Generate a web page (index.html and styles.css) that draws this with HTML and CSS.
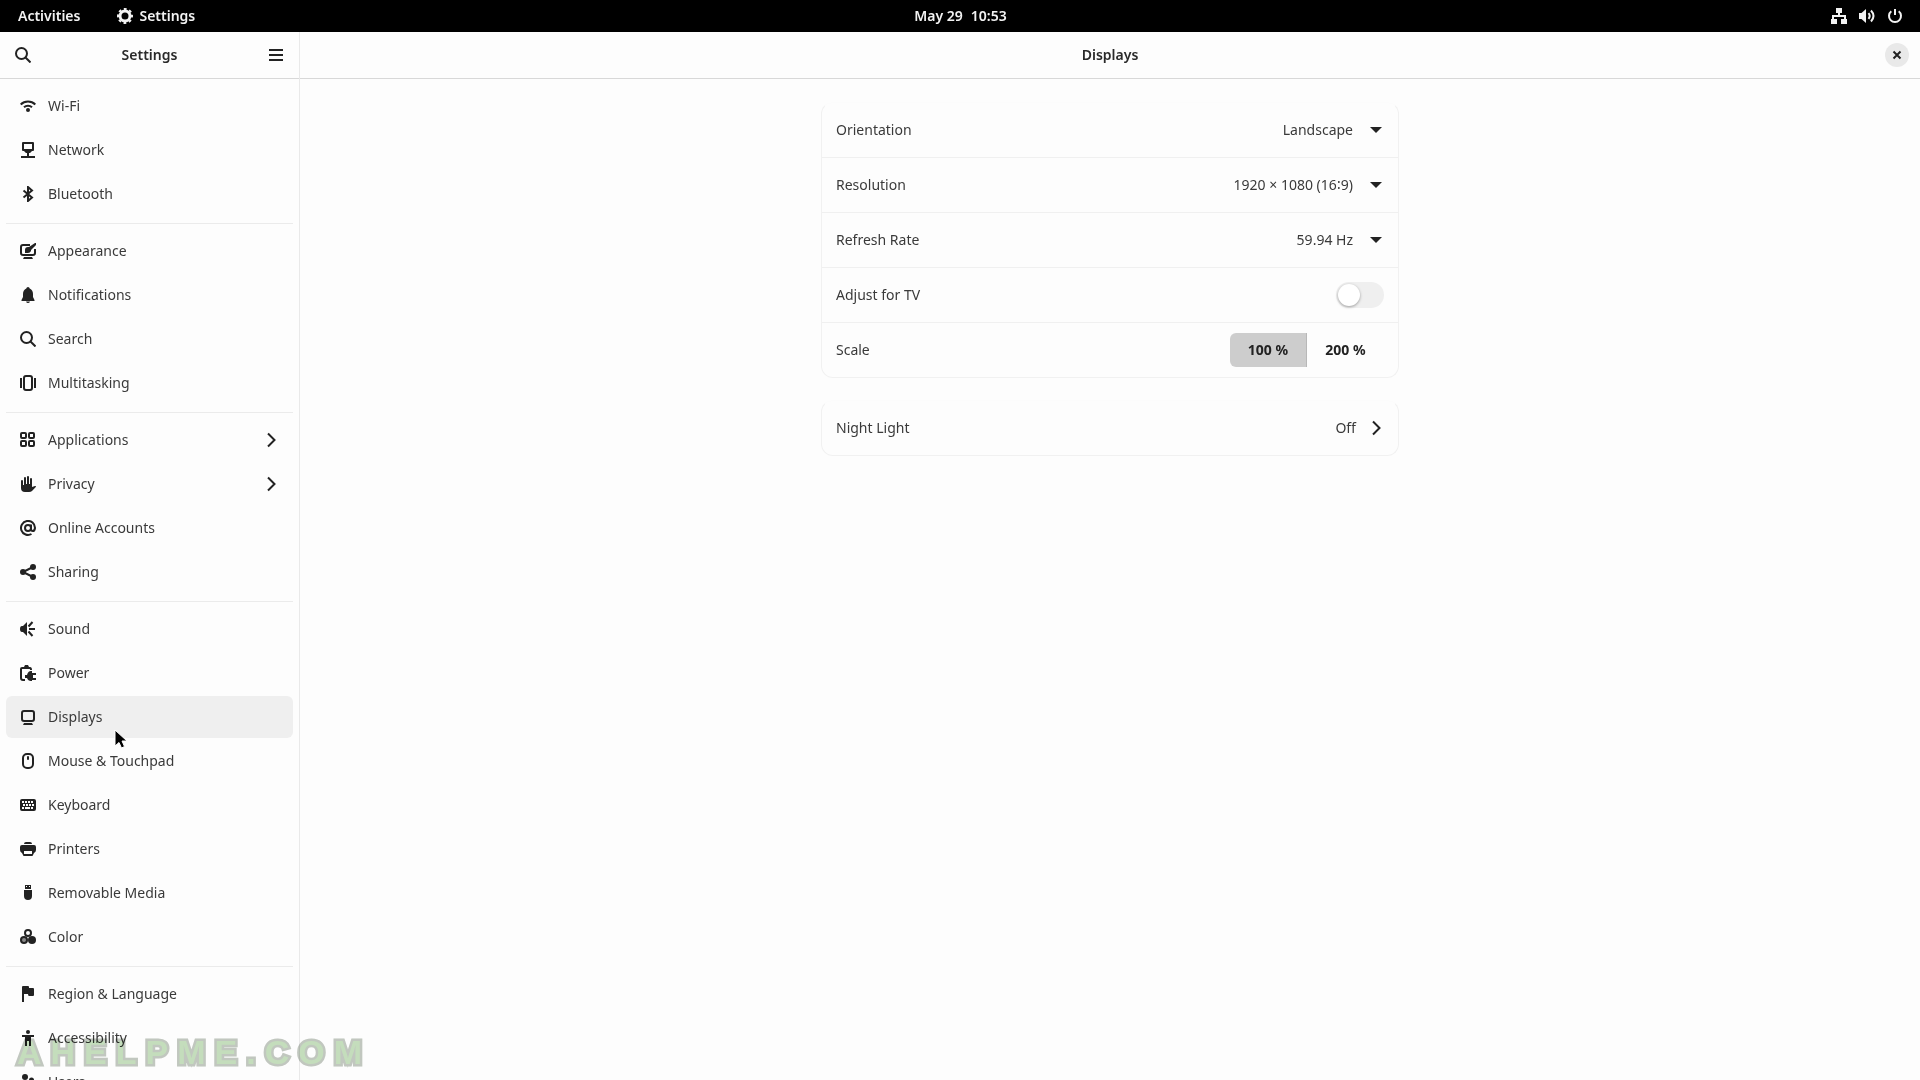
FILE: index.html
```html
<!DOCTYPE html>
<html lang="en">
<head>
    <meta charset="UTF-8">
    <meta name="viewport" content="width=device-width, initial-scale=1.0">
    <title>Settings - Displays</title>
    <link rel="stylesheet" href="styles.css">
</head>
<body>

    <header class="topbar">
        <div class="topbar-left">
            <button class="topbar-item">Activities</button>
            <button class="topbar-item app-menu">
                <svg class="icon" viewBox="0 0 16 16"><circle cx="8" cy="8" r="5" fill="none" stroke="currentColor" stroke-width="3"/><circle cx="8" cy="8" r="7" fill="none" stroke="currentColor" stroke-width="2" stroke-dasharray="2.8 2.7" stroke-dashoffset="1.4"/></svg>
                Settings
            </button>
        </div>
        <button class="topbar-item clock"><span>May 29</span><span>10:53</span></button>
        <button class="topbar-item status" aria-label="System menu">
            <svg class="icon" viewBox="0 0 16 16"><path d="M5 0h6v5H9v2h6v4h1v5h-6v-5h3V9H3v2h3v5H0v-5h1V7h6V5H5z"/></svg>
            <svg class="icon" viewBox="0 0 16 16"><path d="M0 5h2.500L7 1v14l-4.500-4H0z"/><path d="M9.500 5.200q2.400 2.800 0 5.600M12 2.500q5 5.500 0 11" class="line"/></svg>
            <svg class="icon" viewBox="0 0 16 16"><path d="M4.300 3.300a6 6 0 1 0 7.400 0M8 1v6" class="line"/></svg>
        </button>
    </header>

    <div class="window">
        <aside class="sidebar">
            <div class="headerbar">
                <button class="header-button" aria-label="Search">
                    <svg class="icon" viewBox="0 0 16 16"><circle cx="6.500" cy="6.500" r="5.500" class="line"/><path d="M10.500 10.500l5 5" class="line"/></svg>
                </button>
                <h2>Settings</h2>
                <button class="header-button" aria-label="Menu">
                    <svg class="icon" viewBox="0 0 16 16"><path d="M1 2h14v2H1zM1 7h14v2H1zM1 12h14v2H1z"/></svg>
                </button>
            </div>

            <nav class="panels">
                <a href="#wifi"><svg class="icon" viewBox="0 0 16 16"><path d="M.7 6.500c4-4 10.600-4 14.600 0M4 9.300c2.200-2.200 5.800-2.200 8 0" class="line"/><circle cx="8" cy="12" r="2"/></svg>Wi-Fi</a>
                <a href="#network"><svg class="icon" viewBox="0 0 16 16"><path d="M3 1h10v7H3z" class="line" stroke-linejoin="round"/><path d="M3 8h10l-3 3H9v3h6v2H1v-2h6v-3H6z"/></svg>Network</a>
                <a href="#bluetooth"><svg class="icon" viewBox="0 0 16 16"><path d="M3.500 4.500l8.500 7L8 15V1l4 3.500-8.500 7" class="line"/></svg>Bluetooth</a>
                <hr>
                <a href="#appearance"><svg class="icon" viewBox="0 0 16 16"><path d="M10 2H3Q1 2 1 4v6q0 2 2 2h10q2 0 2-2V6" class="line"/><path d="M4 14h8l1 2H3zM5 10V7q0-3 3-3h1l6-4h1v2l-5 5v1q-1 2-3 2z"/></svg>Appearance</a>
                <a href="#notifications"><svg class="icon" viewBox="0 0 16 16"><path d="M8 0q1.500 0 1.700 1.500C12 2.500 13 4.500 13 7v3l1.500 3v1h-13v-1L3 10V7c0-2.500 1-4.500 3.300-5.500Q6.500 0 8 0zM6 14.500h4Q9.500 16 8 16t-2-1.500z"/></svg>Notifications</a>
                <a href="#search"><svg class="icon" viewBox="0 0 16 16"><circle cx="6.500" cy="6.500" r="5.500" class="line"/><path d="M10.500 10.500l5 5" class="line"/></svg>Search</a>
                <a href="#multitasking"><svg class="icon" viewBox="0 0 16 16"><rect x="4" y="1" width="8" height="14" rx="2" class="line"/><path d="M0 3h2v10H0zM14 3h2v10h-2z"/></svg>Multitasking</a>
                <hr>
                <a href="#applications"><svg class="icon" viewBox="0 0 16 16"><g class="line"><rect x="1" y="1" width="5" height="5" rx="1"/><rect x="9" y="1" width="5" height="5" rx="1"/><rect x="1" y="9" width="5" height="5" rx="1"/><rect x="9" y="9" width="5" height="5" rx="1"/></g></svg>Applications<svg class="icon chevron" viewBox="0 0 16 16"><path d="M5 1.500L11.500 8 5 14.500" class="line"/></svg></a>
                <a href="#privacy"><svg class="icon" viewBox="0 0 16 16"><path d="M1 5q0-1 1-1t1 1v4h1V2q0-1 1-1t1 1v6h1V1q0-1 1-1t1 1v7h1V3q0-1 1-1t1 1v8l3-1q1.500 0 .8 1L12 15q-1 1-3 1H5q-4 0-4-4z"/></svg>Privacy<svg class="icon chevron" viewBox="0 0 16 16"><path d="M5 1.500L11.500 8 5 14.500" class="line"/></svg></a>
                <a href="#accounts"><svg class="icon" viewBox="0 0 16 16"><circle cx="8" cy="8" r="3" class="line"/><path d="M11 4.500V9q0 2 1.800 2T15 8a7 7 0 1 0-3.500 6" class="line"/></svg>Online Accounts</a>
                <a href="#sharing"><svg class="icon" viewBox="0 0 16 16"><path d="M13 3L3 8l10 5" class="line"/><circle cx="13" cy="3" r="3"/><circle cx="3" cy="8" r="3"/><circle cx="13" cy="13" r="3"/></svg>Sharing</a>
                <hr>
                <a href="#sound"><svg class="icon" viewBox="0 0 16 16"><path d="M7 1v14l-4-4H2q-2 0-2-3t2-3h1z"/><path d="M9 8h6M8.500 5.500l4-4.500M8.500 10.500l4 4.500" class="line"/></svg>Sound</a>
                <a href="#power"><svg class="icon" viewBox="0 0 16 16"><path d="M5 15H3q-2 0-2-2V4q0-1 1-1h8q1 0 1 2" class="line"/><path d="M3 2h1l1-2h3l1 2h1v2H3zM5 10h2q1-4 4-4h1v2h4v2h-3v3h3v2h-4v1h-1q-3 0-4-3H5z"/></svg>Power</a>
                <a href="#displays" class="active"><svg class="icon" viewBox="0 0 16 16"><rect x="2" y="2" width="12" height="10" rx="2" class="line"/><path d="M4 14h8l1 2H3z"/></svg>Displays</a>
                <a href="#mouse"><svg class="icon" viewBox="0 0 16 16"><rect x="3" y="1" width="10" height="14" rx="4" class="line"/><rect x="7" y="3" width="2" height="4" rx="1"/></svg>Mouse &amp; Touchpad</a>
                <a href="#keyboard"><svg class="icon" viewBox="0 0 16 16"><path fill-rule="evenodd" d="M2 2h12q2 0 2 2v8q0 2-2 2H2q-2 0-2-2V4q0-2 2-2zm0 2v2h2V4zm3 0v2h2V4zm3 0v2h2V4zm3 0v2h2V4zM3 7v2h2V7zm3 0v2h2V7zm3 0v2h2V7zm3 0v2h2V7zM2 10v2h2v-2zm3 0v2h5v-2zm6 0v2h2v-2z"/></svg>Keyboard</a>
                <a href="#printers"><svg class="icon" viewBox="0 0 16 16"><path fill-rule="evenodd" d="M4 3q0-2 2-2h4q2 0 2 2zM2 4h12q2 0 2 2v3q0 2-2 3l-1 2q0 1-1 1H4q-1 0-1-1l-1-2q-2-1-2-3V6q0-2 2-2zm2 6v3h8v-3z"/></svg>Printers</a>
                <a href="#media"><svg class="icon" viewBox="0 0 16 16"><path fill-rule="evenodd" d="M5 0h6v4H5zm1 1v1h1V1zm3 0v1h1V1zM4 5h8v6q0 4-4 4t-4-4z"/></svg>Removable Media</a>
                <a href="#color"><svg class="icon" viewBox="0 0 16 16"><circle cx="4" cy="11" r="4"/><circle cx="12" cy="11" r="4"/><circle cx="4" cy="11" r="2" fill="#888"/><circle cx="8" cy="4" r="3" fill="#fdfdfd" stroke="currentColor" stroke-width="2"/></svg>Color</a>
                <hr>
                <a href="#region"><svg class="icon" viewBox="0 0 16 16"><path d="M2 16V1q0-1 1-1h5q1 0 1 1v1h4q1 0 1 1v6q0 1-1 1H9q-1 0-1-2H4v8z"/></svg>Region &amp; Language</a>
                <a href="#accessibility"><svg class="icon" viewBox="0 0 16 16"><circle cx="8" cy="2" r="2"/><path d="M2 5h12v2h-3v9H9v-5H7v5H5V7H2z"/></svg>Accessibility</a>
                <a href="#users"><svg class="icon" viewBox="0 0 16 16"><circle cx="5" cy="3" r="3"/><circle cx="11.500" cy="6" r="2.500"/><path d="M0 14q0-7 5-7t5 7zM11 14h5q0-5-4-5h-1z"/></svg>Users</a>
            </nav>
        </aside>

        <main class="content">
            <div class="headerbar">
                <h1>Displays</h1>
                <button class="close-button" aria-label="Close">
                    <svg class="icon" viewBox="0 0 16 16"><path d="M4.500 4.500l7 7M11.500 4.500l-7 7" class="line"/></svg>
                </button>
            </div>

            <div class="page">
                <section class="card">
                    <div class="row">
                        <label for="orientation">Orientation</label>
                        <select id="orientation">
                            <option>Landscape</option>
                        </select>
                    </div>
                    <div class="row">
                        <label for="resolution">Resolution</label>
                        <select id="resolution">
                            <option>1920 × 1080 (16∶9)</option>
                        </select>
                    </div>
                    <div class="row">
                        <label for="refresh">Refresh Rate</label>
                        <select id="refresh">
                            <option>59.94 Hz</option>
                        </select>
                    </div>
                    <div class="row">
                        <label for="tv">Adjust for TV</label>
                        <input type="checkbox" id="tv" class="switch">
                    </div>
                    <div class="row">
                        <span id="scale-label">Scale</span>
                        <div class="scale" role="group" aria-labelledby="scale-label">
                            <button class="selected" aria-pressed="true">100 %</button>
                            <button aria-pressed="false">200 %</button>
                        </div>
                    </div>
                </section>

                <section class="card">
                    <a href="#night-light" class="row">
                        Night Light
                        <span class="value">Off <svg class="icon" viewBox="0 0 16 16"><path d="M5 1.500L11.500 8 5 14.500" class="line"/></svg></span>
                    </a>
                </section>
            </div>
        </main>
    </div>

    <div class="watermark">AHELPME.COM</div>

    <svg class="cursor" viewBox="0 0 14 20"><path d="M1 1v16l4-3.500 2.500 5.500 3-1.500L8 12h5z" fill="#000" stroke="#fff"/></svg>

</body>
</html>
```
FILE: styles.css
```css
* {
    box-sizing: border-box;
}
body {
    margin: 0;
    height: 100vh;
    display: flex;
    flex-direction: column;
    overflow: hidden;
    font-family: "Noto Sans", "Open Sans", sans-serif;
    font-size: 14px;
    line-height: 20px;
    color: #3a3a3a;
    background: #fdfdfd;
}
button, select {
    font: inherit;
    color: inherit;
    border: none;
    background: none;
    padding: 0;
}
a {
    color: inherit;
    text-decoration: none;
}
h1, h2 {
    margin: 0;
    font-size: 14px;
    font-weight: 600;
    color: #2a2a2a;
}
.icon {
    width: 16px;
    height: 16px;
    flex: none;
    display: block;
    fill: currentColor;
    color: #222;
}
.line {
    fill: none;
    stroke: currentColor;
    stroke-width: 2;
}

/* top bar */
.topbar {
    display: grid;
    grid-template-columns: 1fr auto 1fr;
    align-items: center;
    flex: none;
    height: 32px;
    padding: 0 17px 0 18px;
    background: #000;
    color: #f2f2f2;
}
.topbar .icon {
    color: #f2f2f2;
}
.topbar-left {
    display: flex;
    gap: 37px;
}
.topbar-item {
    display: flex;
    align-items: center;
    font-weight: 600;
}
.app-menu {
    gap: 6px;
}
.clock {
    gap: 8px;
}
.status {
    justify-self: end;
    gap: 12px;
}

/* window */
.window {
    flex: 1;
    min-height: 0;
    display: flex;
}
.headerbar {
    position: relative;
    display: flex;
    align-items: center;
    justify-content: space-between;
    flex: none;
    height: 47px;
    padding: 0 6px;
    border-bottom: 1px solid #d8d8d8;
}
.sidebar {
    width: 300px;
    flex: none;
    display: flex;
    flex-direction: column;
    border-right: 1px solid #e9e9e9;
}
.header-button {
    width: 34px;
    height: 34px;
    display: flex;
    align-items: center;
    justify-content: center;
}
.panels {
    flex: 1;
    min-height: 0;
    overflow: hidden;
    display: flex;
    flex-direction: column;
    gap: 2px;
    padding: 6px 6px 0;
}
.panels a {
    display: flex;
    align-items: center;
    gap: 12px;
    flex: none;
    height: 42px;
    padding: 0 14px;
    border-radius: 6px;
}
.panels .active {
    background: #efefef;
}
.panels hr {
    width: 100%;
    height: 1px;
    flex: none;
    margin: 6px 0 4px;
    border: none;
    background: #ebebeb;
}
.chevron {
    margin-left: auto;
}

/* displays panel */
.content {
    flex: 1;
    min-width: 0;
}
.content .headerbar {
    justify-content: center;
}
.close-button {
    position: absolute;
    right: 11px;
    width: 24px;
    height: 24px;
    display: flex;
    align-items: center;
    justify-content: center;
    border-radius: 50%;
    background: #e9e9e9;
}
.page {
    display: flex;
    flex-direction: column;
    gap: 22px;
    max-width: 578px;
    margin: 23px auto;
}
.card {
    border: 1px solid #f1f1f1;
    border-top-color: #fcfcfc;
    border-radius: 12px;
}
.row {
    display: flex;
    align-items: center;
    justify-content: space-between;
    height: 54px;
    padding: 0 14px;
}
.row + .row {
    height: 55px;
    border-top: 1px solid #f0f0f0;
}
select {
    appearance: none;
    height: 34px;
    padding-right: 31px;
    text-align-last: right;
    /* small down arrow at the right edge */
    background: url("data:image/svg+xml,%3Csvg xmlns='http://www.w3.org/2000/svg' width='12' height='6'%3E%3Cpath d='M0 0h12L6 6z' fill='%23222'/%3E%3C/svg%3E") no-repeat right 2px center;
}
.switch {
    appearance: none;
    width: 48px;
    height: 26px;
    margin: 0;
    padding: 2px;
    border-radius: 13px;
    background: #efefef;
}
.switch::before {
    content: "";
    display: block;
    width: 22px;
    height: 22px;
    border-radius: 50%;
    background: #fff;
    box-shadow: 0 1px 3px rgba(0, 0, 0, 0.35);
}
.switch:checked::before {
    margin-left: auto;
}
.scale {
    display: flex;
}
.scale button {
    width: 77px;
    height: 34px;
    font-weight: 700;
    color: #222;
}
.scale .selected {
    background: #cdcdcd;
    border-right: 1px solid #b8b8b8;
    border-radius: 6px 0 0 6px;
}
.value {
    display: flex;
    align-items: center;
    gap: 12px;
}

/* overlays */
.watermark {
    position: absolute;
    left: 17px;
    bottom: 8px;
    font: bold 34px/40px "Liberation Sans", sans-serif;
    letter-spacing: 9px;
    color: #c6dfbe;
    -webkit-text-stroke: 5px #c3c9c1;
    paint-order: stroke fill;
    text-shadow: none;
    mix-blend-mode: multiply;
    pointer-events: none;
}
.cursor {
    position: absolute;
    left: 114px;
    top: 729px;
    width: 14px;
    height: 20px;
}
```
